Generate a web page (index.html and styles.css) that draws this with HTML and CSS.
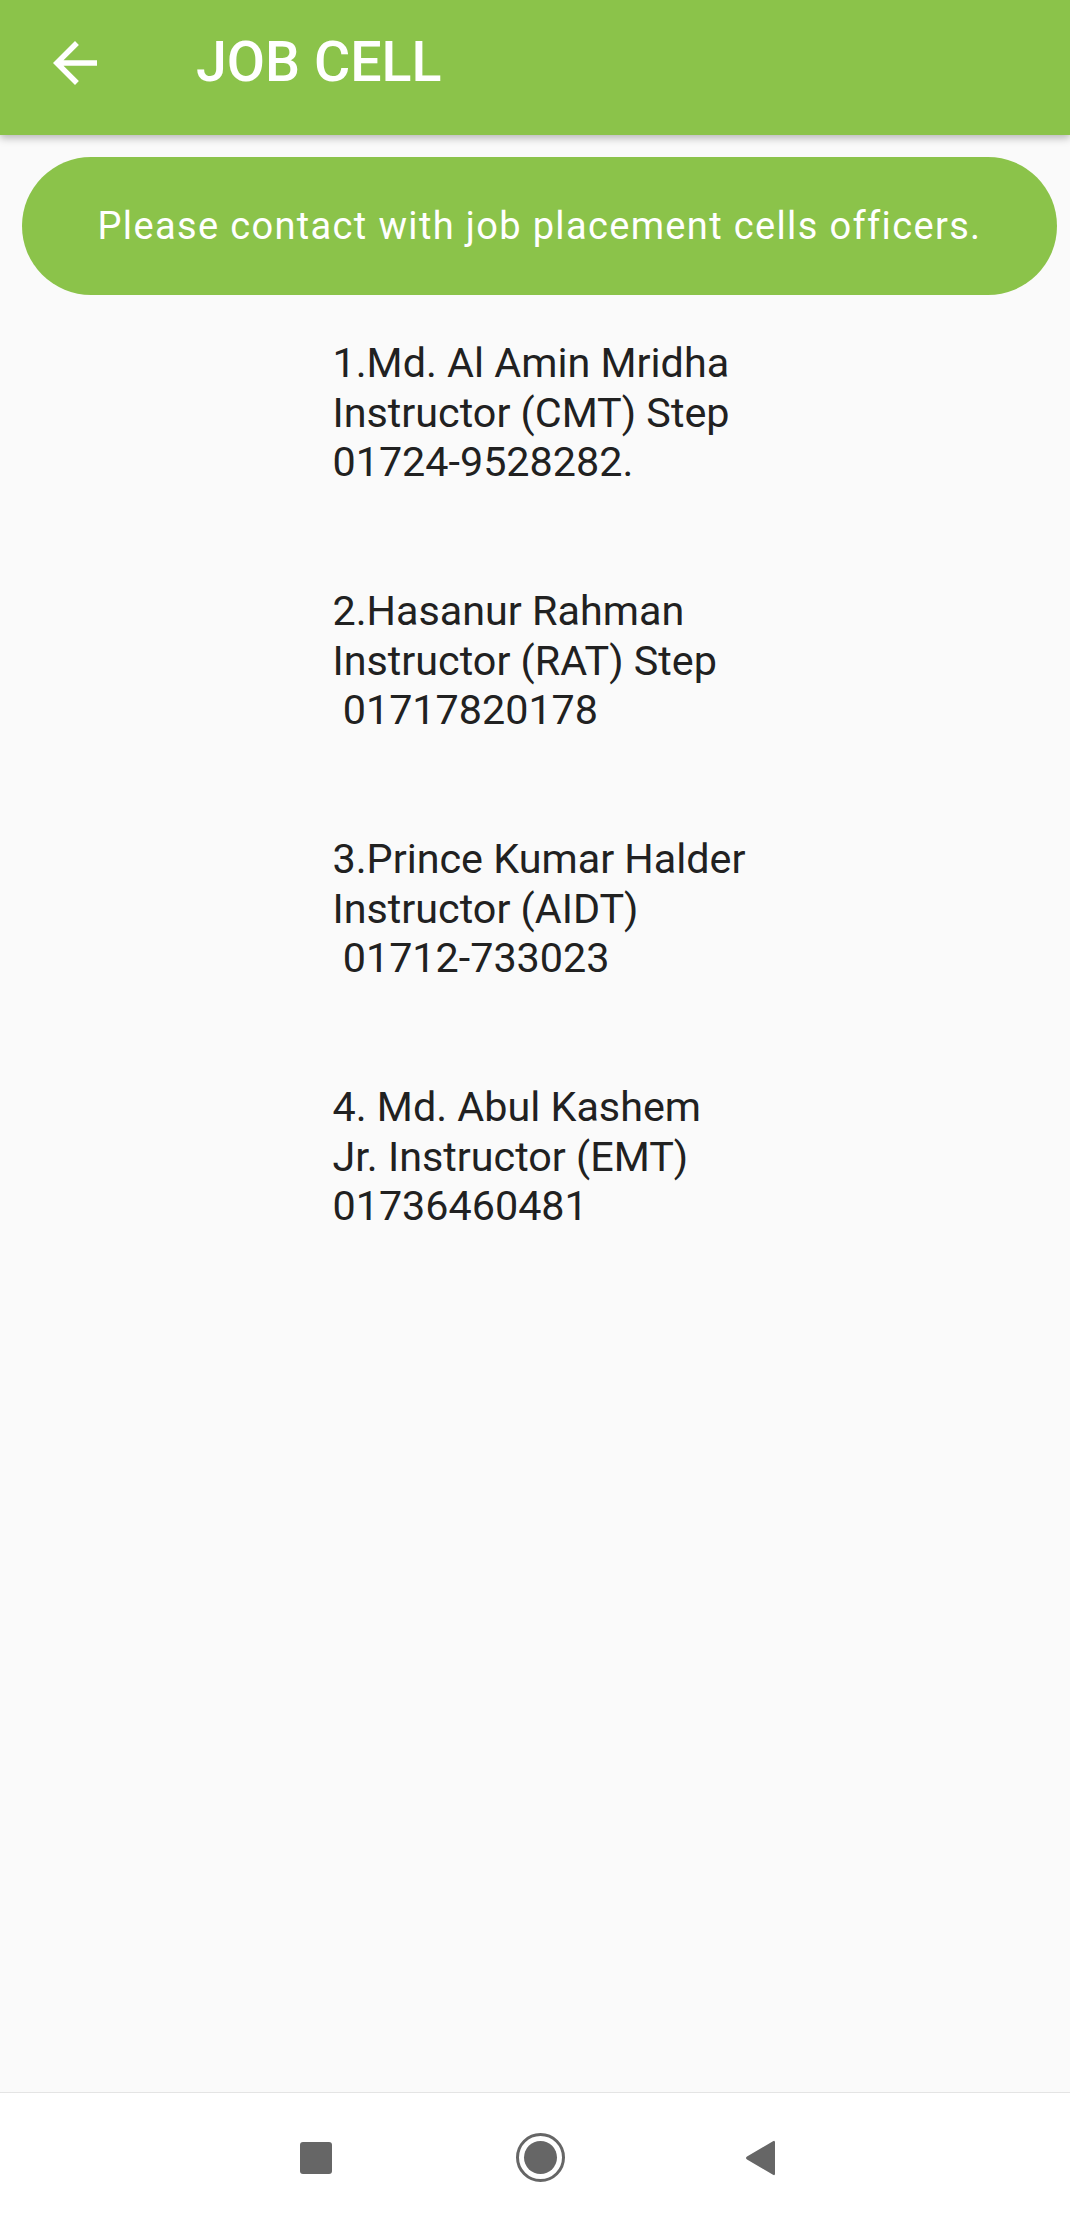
FILE: index.html
```html
<!DOCTYPE html>
<html>
<head>
<meta charset="utf-8">
<link rel="stylesheet" href="styles.css">
</head>
<body>
<div class="app">
  <header class="appbar">
    <svg class="back" viewBox="0 0 24 24"><path d="M20 11H7.83l5.59-5.59L12 4l-8 8 8 8 1.41-1.41L7.83 13H20v-2z" fill="#fff"/></svg>
    <h1 class="title">JOB CELL</h1>
  </header>
  <main class="content">
    <div class="banner">Please contact with job placement cells officers.</div>
    <div class="contacts">
      <div class="contact-text">1.Md. Al Amin Mridha
Instructor (CMT) Step
01724-9528282.


2.Hasanur Rahman
Instructor (RAT) Step
 01717820178


3.Prince Kumar Halder
Instructor (AIDT)
 01712-733023


4. Md. Abul Kashem
Jr. Instructor (EMT)
01736460481</div>
    </div>
  </main>
  <nav class="navbar">
    <span class="nav-square"></span>
    <span class="nav-home"><span class="nav-home-dot"></span></span>
    <svg class="nav-back" viewBox="0 0 32 36"><path d="M30 2.5 L30 33.5 Q30 36 28 34.8 L2 19.5 Q0 18 2 16.5 L28 1.2 Q30 0 30 2.5 Z" fill="#666"/></svg>
  </nav>
</div>
</body>
</html>
```
FILE: styles.css
```css
html, body {
  margin: 0;
  padding: 0;
}
body {
  background: #fafafa;
  font-family: Roboto, "Liberation Sans", sans-serif;
}
.app {
  width: 1070px;
  height: 2222px;
  display: flex;
  flex-direction: column;
  overflow: hidden;
}
.appbar {
  height: 135px;
  flex: none;
  background: #8bc34a;
  display: flex;
  align-items: center;
  box-shadow: 0 3px 8px rgba(0, 0, 0, 0.28);
  position: relative;
  z-index: 1;
}
.back {
  width: 66px;
  height: 66px;
  margin-left: 42px;
  margin-top: -10px;
  flex: none;
}
.title {
  margin: -10px 0 0 88px;
  font-size: 55.5px;
  font-weight: 500;
  color: #fff;
  letter-spacing: 0;
}
.content {
  flex: 1;
  display: flex;
  flex-direction: column;
}
.banner {
  margin: 22px 13px 0 22px;
  height: 138px;
  border-radius: 69px;
  background: #8bc34a;
  color: #fff;
  font-size: 38px;
  letter-spacing: 1.35px;
  display: flex;
  align-items: center;
  justify-content: center;
}
.contacts {
  display: flex;
  justify-content: center;
  margin-top: 44px;
  padding-left: 8px;
}
.contact-text {
  white-space: pre;
  font-size: 41.3px;
  line-height: 49.6px;
  color: #212121;
}
.navbar {
  height: 129px;
  flex: none;
  background: #fff;
  border-top: 1px solid #e4e4e4;
  display: flex;
  align-items: center;
  justify-content: center;
  padding-left: 6px;
}
.nav-square {
  width: 32px;
  height: 32px;
  background: #666;
  border-radius: 3px;
  margin-right: 184px;
}
.nav-home {
  width: 43px;
  height: 43px;
  border: 3px solid #666;
  border-radius: 50%;
  display: flex;
  align-items: center;
  justify-content: center;
  margin-right: 180px;
}
.nav-home-dot {
  width: 33px;
  height: 33px;
  background: #666;
  border-radius: 50%;
}
.nav-back {
  width: 32px;
  height: 36px;
}
```
